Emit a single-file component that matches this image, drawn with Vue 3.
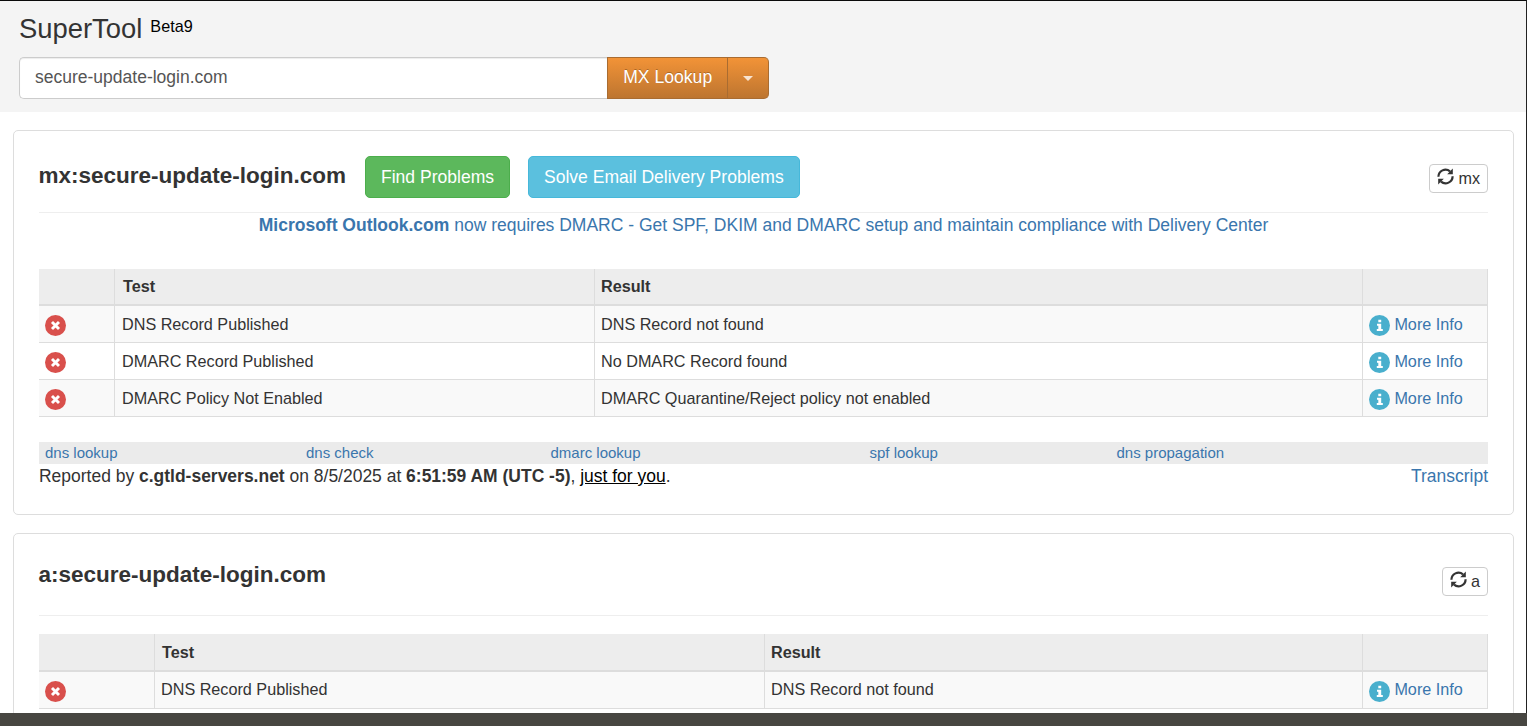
<script setup>
const reports = [
  {
    kind: 'mx',
    title: 'mx:secure-update-login.com',
    actions: [
      { label: 'Find Problems', tone: 'success' },
      { label: 'Solve Email Delivery Problems', tone: 'info' },
    ],
    notice: true,
    rows: [
      { test: 'DNS Record Published', result: 'DNS Record not found' },
      { test: 'DMARC Record Published', result: 'No DMARC Record found' },
      { test: 'DMARC Policy Not Enabled', result: 'DMARC Quarantine/Reject policy not enabled' },
    ],
    links: ['dns lookup', 'dns check', 'dmarc lookup', 'spf lookup', 'dns propagation'],
  },
  {
    kind: 'a',
    title: 'a:secure-update-login.com',
    actions: [],
    notice: false,
    rows: [{ test: 'DNS Record Published', result: 'DNS Record not found' }],
    links: [],
  },
]
</script>

<template>
  <div class="page">
    <header class="hero">
      <h1 class="brand">SuperTool <span class="beta">Beta9</span></h1>
      <div class="search">
        <div class="field"><span class="field-text">secure-update-login.com</span></div>
        <div class="lookup"><span class="lookup-text">MX Lookup</span></div>
        <div class="toggle"><span class="caret"></span></div>
      </div>
    </header>

    <main class="reports">
      <section v-for="r in reports" :key="r.kind" class="card" :class="'card-' + r.kind">
        <div class="head">
          <h2 class="title">{{ r.title }}</h2>
          <a v-for="b in r.actions" :key="b.label" class="btn" :class="b.tone"><span>{{ b.label }}</span></a>
          <a class="refresh">
            <svg width="17" height="17" viewBox="0 0 17 17">
              <g fill="none" stroke="#333" stroke-width="2.2">
                <path d="M1.4 8.8A7.1 7.1 0 0 1 13 3.3" />
                <path d="M15.6 8.2A7.1 7.1 0 0 1 4 13.7" />
              </g>
              <path d="M15.8 .6V6.2H10.2z" fill="#333" />
              <path d="M1.2 16.4V10.8H6.8z" fill="#333" />
            </svg>
            <span>{{ r.kind }}</span>
          </a>
        </div>

        <p v-if="r.notice" class="notice">
          <a><b>Microsoft Outlook.com</b> now requires DMARC - Get SPF, DKIM and DMARC setup and maintain compliance with Delivery Center</a>
        </p>

        <div class="table">
          <div class="tr th">
            <div></div>
            <div><span class="head-test">Test</span></div>
            <div><span>Result</span></div>
            <div></div>
          </div>
          <div v-for="row in r.rows" :key="row.test" class="tr">
            <div>
              <svg class="icon" width="21" height="21" viewBox="0 0 21 21">
                <circle cx="10.5" cy="10.5" r="10.5" fill="#d9504c" />
                <path d="M7 7l7 7M14 7l-7 7" stroke="#fff" stroke-width="2.9" />
              </svg>
            </div>
            <div><span>{{ row.test }}</span></div>
            <div><span>{{ row.result }}</span></div>
            <div>
              <svg class="icon" width="21" height="21" viewBox="0 0 21 21">
                <circle cx="10.5" cy="10.5" r="10.5" fill="#49afcd" />
                <path d="M9.3 4.8h2.9v2.5H9.3zM8 8.8h4.2V14h1.6v2H7.8v-2h1.5v-3.3H8z" fill="#fff" />
              </svg>
              <a class="more">More Info</a>
            </div>
          </div>
        </div>

        <template v-if="r.links.length">
          <nav class="links">
            <a v-for="l in r.links" :key="l"><span>{{ l }}</span></a>
          </nav>
          <div class="foot">
            <span class="reported">Reported by <b>c.gtld-servers.net</b> on 8/5/2025 at <b>6:51:59 AM (UTC -5)</b>, <u>just for you</u>.</span>
            <a class="transcript">Transcript</a>
          </div>
        </template>
      </section>
    </main>
    <footer class="bar"></footer>
  </div>
</template>

<style>
body {
  overflow: hidden;
  background: #fff;
}
</style>

<style scoped>
* {
  box-sizing: border-box;
}
.page {
  display: flex;
  flex-direction: column;
  width: 1527px;
  height: 726px;
  overflow: hidden;
  font-family: "Liberation Sans", Arial, sans-serif;
  font-size: 16.22px;
  color: #333;
  white-space: nowrap;
}
a {
  color: #3a76ad;
}
.hero {
  flex: none;
  height: 112px;
  padding: 9px 0 0 19px;
  background: #f4f4f4;
  border-top: 1px solid #0a0a0a;
  border-right: 1px solid #222;
}
.brand {
  display: flex;
  gap: 8px;
  height: 47px;
  margin: 0;
  font-size: 27.4px;
  font-weight: 400;
  line-height: 38px;
}
.beta {
  font-size: 16.2px;
  line-height: 32px;
  color: #000;
}
.search {
  display: flex;
  width: 750px;
  height: 42px;
  font-size: 17.6px;
  line-height: 38px;
}
.field {
  width: 588px;
  padding-left: 15px;
  font-size: 17.5px;
  color: #555;
  background: #fff;
  border: 1px solid #ccc;
  border-right: 0;
  border-radius: 5px 0 0 5px;
  box-shadow: inset 0 1px 1px rgba(0, 0, 0, 0.075);
}
.lookup,
.toggle {
  color: #fff;
  background: linear-gradient(#f29337, #bd7530);
  border: 1px solid #a96c31;
}
.lookup {
  width: 121px;
  padding-left: 15.2px;
  text-shadow: 0 -1px 0 rgba(0, 0, 0, 0.25);
}
.toggle {
  display: flex;
  align-items: center;
  justify-content: center;
  width: 41px;
  border-left: 0;
  border-radius: 0 5px 5px 0;
}
.caret {
  border: 5px solid transparent;
  border-top-color: #f8e4d0;
  border-bottom: 0;
}
.reports {
  display: flex;
  flex: none;
  flex-direction: column;
  gap: 18px;
  height: 601px;
  padding: 18px 12px 0 13px;
  overflow: hidden;
  border-right: 1px solid #222;
}
.card {
  flex: none;
  width: 1501px;
  padding: 0 25px;
  border: 1px solid #ddd;
  border-radius: 5px;
}
.card-mx {
  height: 385px;
}
.card-a {
  height: 220px;
}
.head {
  display: flex;
  height: 82px;
  padding-top: 25px;
  border-bottom: 1px solid #eee;
}
.title {
  width: 326px;
  margin: 0;
  font-size: 22.5px;
  font-weight: 700;
  line-height: 40px;
  text-indent: -0.5px;
}
.btn {
  height: 42px;
  margin-right: 18px;
  padding-left: 15px;
  font-size: 17.55px;
  line-height: 40px;
  color: #fff;
  border: 1px solid;
  border-radius: 5px;
}
.success {
  width: 145px;
  background: #5cb85c;
  border-color: #4cae4c;
}
.info {
  width: 272px;
  background: #5bc0de;
  border-color: #46b8da;
}
.refresh {
  display: flex;
  gap: 4px;
  height: 29px;
  margin: 8px 0 0 auto;
  padding: 0 7px;
  line-height: 27px;
  color: #333;
  border: 1px solid #ccc;
  border-radius: 4px;
}
.refresh svg {
  margin-top: 3px;
}
.card-a .head {
  padding-top: 21px;
}
.card-a .refresh {
  margin-top: 12px;
}
.notice {
  height: 56px;
  margin: 0;
  font-size: 17.5px;
  line-height: 24px;
  text-align: center;
}
.table {
  border-right: 1px solid #ddd;
}
.card-a .table {
  margin-top: 18px;
}
.tr {
  display: grid;
  grid-template-columns: 75px 480px 768px 125px;
  height: 37px;
  line-height: 36px;
  border-bottom: 1px solid #ddd;
}
.card-a .tr {
  grid-template-columns: 115px 610px 598px 125px;
}
.tr:nth-child(even) {
  background: #f9f9f9;
}
.th {
  font-weight: 700;
  line-height: 35px;
  background: #ededed;
  border-bottom-width: 2px;
}
.tr > div {
  display: flex;
  padding-left: 6px;
  border-left: 1px solid #ddd;
}
.tr > div:nth-child(2) {
  padding-left: 7px;
}
.tr > div:first-child {
  border-left: 0;
}
.card-a .tr > div:nth-child(2) {
  padding-left: 6px;
}
.card-a .th {
  height: 38px;
  line-height: 37px;
}
.card-a .tr:not(.th) {
  line-height: 34px;
}
.head-test {
  margin-left: 1px;
}
.icon {
  margin-top: 9px;
}
.card-a .icon {
  margin-top: 8.5px;
}
.more {
  margin-left: 4.4px;
}
.links {
  display: grid;
  grid-template-columns: 261px 244.5px 319px 247px 1fr;
  height: 22px;
  margin-top: 25px;
  padding-left: 6px;
  font-size: 15px;
  line-height: 22px;
  background: #ebebeb;
}
.foot {
  display: flex;
  justify-content: space-between;
  font-size: 17.48px;
  line-height: 24px;
}
u {
  color: #000;
}
.bar {
  flex: none;
  height: 13px;
  background: #474641;
}
</style>
